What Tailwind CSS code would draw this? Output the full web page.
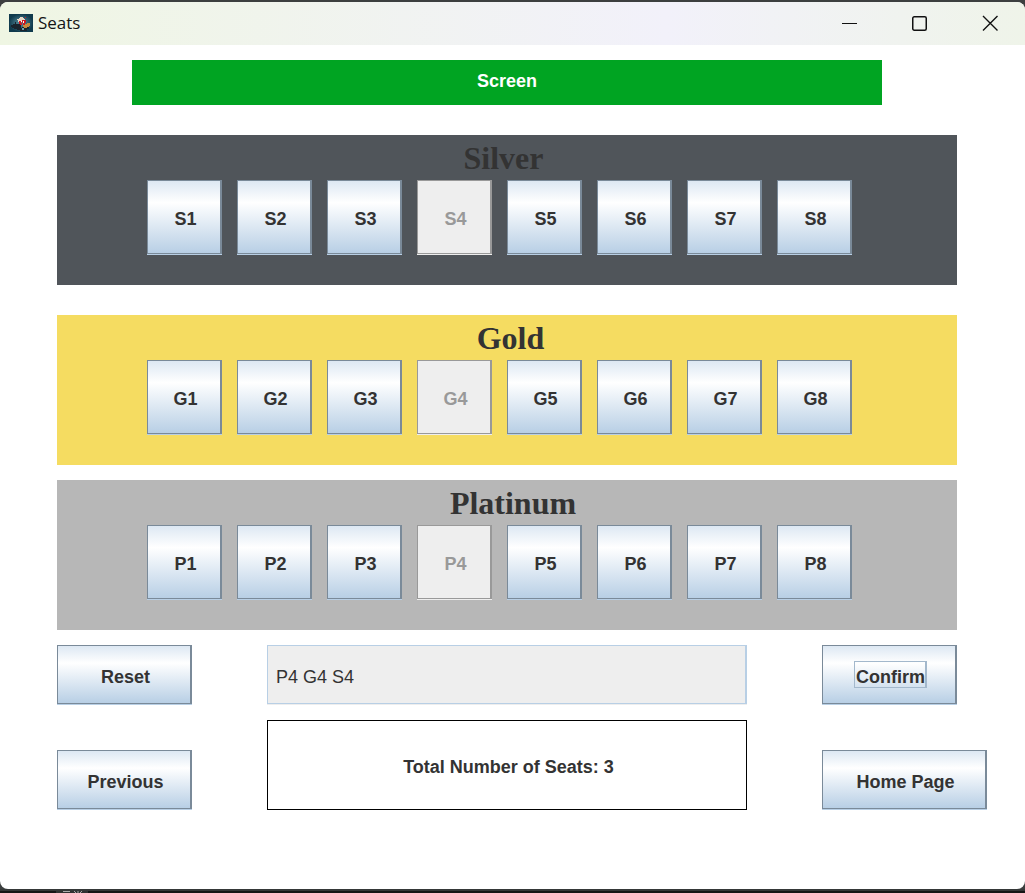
<!DOCTYPE html>
<html lang="en">
<head>
<meta charset="utf-8">
<meta name="viewport" content="width=device-width, initial-scale=1">
<title>Seats</title>
<script src="https://cdn.jsdelivr.net/npm/@tailwindcss/browser@4"></script>
</head>
<body class="flex min-h-screen flex-col bg-[#3c3f3f] pt-[2px] font-['Liberation_Sans',Arial,sans-serif] text-lg text-[#333333]">
<div class="flex grow flex-col overflow-hidden rounded-lg bg-white">
  <header class="flex h-[43px] shrink-0 items-center bg-linear-to-r from-[#eff6e3] via-[#f2f1fa] via-65% to-[#eff4e9] pl-[9px]">
    <svg class="mr-[5px] mb-[2px] h-[18px] w-6" viewBox="0 0 24 18" shape-rendering="crispEdges" aria-hidden="true">
      <defs><radialGradient id="sky"><stop offset="0" stop-color="#5d93a3"/><stop offset="1" stop-color="#103b4d"/></radialGradient></defs>
      <path fill="url(#sky)" d="M0 0h24v18H0z"/>
      <path fill="#19242d" d="M2 11h2v-1h2V8h1v2h5v4h3v3h-4v-1H8v-1H5v-1H3v-1H2zM13 13h7v2h-2v2h-3v-2h-2z"/>
      <path fill="#e9d7c7" d="M8 5h2V4h1V3h3v1h1v1h1v1h-2v2h-1V7h-3v1H9V6H8z"/>
      <path fill="#cf1820" d="M10 7h2v2h1v2h-2v-1h-1zM13 6h4v3h-1v2h-2V9h-1zM16 3h1v1h-1z"/>
      <path fill="#fff" d="M12 7h1v1h-1zM14 7h1v2h-1z"/>
      <path fill="#c78a3f" d="M14 11h2v-1h2V9h3v3h-1v1h-2v1h-3v-1h-1z"/>
      <path fill="#6d9eb0" d="M13 14h2v2h-2z"/>
    </svg>
    <h1 class="grow pb-px font-['Open_Sans','Noto_Sans',sans-serif] text-[17px] leading-6 text-[#151515]">Seats</h1>
    <div class="flex h-full shrink-0 pb-[2px]">
      <button class="flex w-[68px] items-center justify-center" aria-label="Minimize"><svg class="size-4" viewBox="0 0 16 16" fill="none" stroke="#111"><path d="M0 8.500h15"/></svg></button>
      <button class="flex w-[70px] items-center justify-center" aria-label="Maximize"><svg class="size-4" viewBox="0 0 16 16" fill="none" stroke="#111" stroke-width="1.5"><rect x="1.750" y="1.750" width="13.500" height="13.500" rx="1.500"/></svg></button>
      <button class="flex w-[71px] items-center justify-center" aria-label="Close"><svg class="size-4" viewBox="0 0 16 16" fill="none" stroke="#111" stroke-width="1.400"><path d="M1 1l14.500 14.500M15.500 1L1 15.500"/></svg></button>
    </div>
  </header>

  <main class="grow pt-[15px] pr-[38px] pl-[57px]">
    <div class="mr-[105px] ml-[75px] flex h-[45px] items-center justify-center bg-[#00a422] pb-1 font-bold text-white">Screen</div>
    <div id="sections" class="mt-[30px] mr-[30px]"></div>

    <div class="mt-[15px] flex gap-[75px]">
      <div class="flex w-[135px] shrink-0 flex-col justify-between">
        <button class="mb-px h-[59px] border border-r-2 border-[#7a8a99] bg-linear-to-b from-[#dde8f3] via-white via-30% to-[#b8cfe5] pt-1 pl-[3px] font-bold shadow-[0_1px_0_#b8cfe5]">Reset</button>
        <button class="mb-px h-[59px] border border-r-2 border-[#7a8a99] bg-linear-to-b from-[#dde8f3] via-white via-30% to-[#b8cfe5] pt-1 pl-[3px] font-bold shadow-[0_1px_0_#b8cfe5]">Previous</button>
      </div>
      <div class="flex min-w-0 grow flex-col gap-4">
        <input class="h-[59px] w-full border border-r-2 border-[#b8cfe5] bg-[#eeeeee] px-2 pt-[6px] shadow-[0_1px_0_#eeeeee] outline-none" aria-label="Selected seats" value="P4 G4 S4" readonly>
        <output class="flex h-[90px] items-center justify-center border border-black pt-1 pl-[3px] font-bold">Total Number of Seats: 3</output>
      </div>
      <div class="flex w-[165px] shrink-0 flex-col justify-between">
        <button class="mb-px flex h-[59px] w-[135px] items-center justify-center border border-r-2 border-[#7a8a99] bg-linear-to-b from-[#dde8f3] via-white via-30% to-[#b8cfe5] pl-[3px] font-bold shadow-[0_1px_0_#b8cfe5]"><span class="h-[27px] border border-r-2 border-[#a3b8cc] pt-[3px] pl-px leading-6">Confirm</span></button>
        <button class="mb-px h-[59px] border border-r-2 border-[#7a8a99] bg-linear-to-b from-[#dde8f3] via-white via-30% to-[#b8cfe5] pt-1 pl-[3px] font-bold shadow-[0_1px_0_#b8cfe5]">Home Page</button>
      </div>
    </div>
  </main>
</div>
<footer class="flex h-1 shrink-0 overflow-hidden border-t-2 border-[#353838] bg-[#151616]" aria-hidden="true">
  <svg class="ml-14 h-[2px] w-8" viewBox="0 0 32 2"><path fill="#303232" d="M0 0h32v2H0z"/><path stroke="#aaa" d="M7 .5h7M18 0l2 2M22 0v2M26 0l-2 2"/></svg>
</footer>

<script>
  const sections = [
    { name: "Silver", style: "bg-[#50555a]", heading: "pr-[7px]" },
    { name: "Gold", style: "mt-[30px] bg-[#f5dc61]", heading: "pl-[7px]" },
    { name: "Platinum", style: "mt-[15px] bg-[#b7b7b7]", heading: "pl-3" }
  ];
  const base = "mb-px h-[74px] border border-r-2 pt-1 pl-[3px] font-bold ";
  const open = base + "border-[#7a8a99] bg-linear-to-b from-[#dde8f3] via-white via-30% to-[#b8cfe5] shadow-[0_1px_0_#b8cfe5]";
  const taken = base + "border-[#999999] bg-[#eeeeee] text-[#999999] shadow-[0_1px_0_#eeeeee]";
  document.getElementById("sections").innerHTML = sections.map(s => `
    <section class="h-[150px] ${s.style}">
      <h2 class="h-[45px] text-center font-['Liberation_Serif',serif] text-[32px] leading-[47px] font-bold ${s.heading}">${s.name}</h2>
      <div class="grid grid-cols-8 gap-[15px] pr-[105px] pl-[90px]">
        ${[1,2,3,4,5,6,7,8].map(n => `<button class="${n === 4 ? taken : open}"${n === 4 ? " disabled" : ""}>${s.name[0]}${n}</button>`).join("")}
      </div>
    </section>`).join("");
</script>
</body>
</html>
